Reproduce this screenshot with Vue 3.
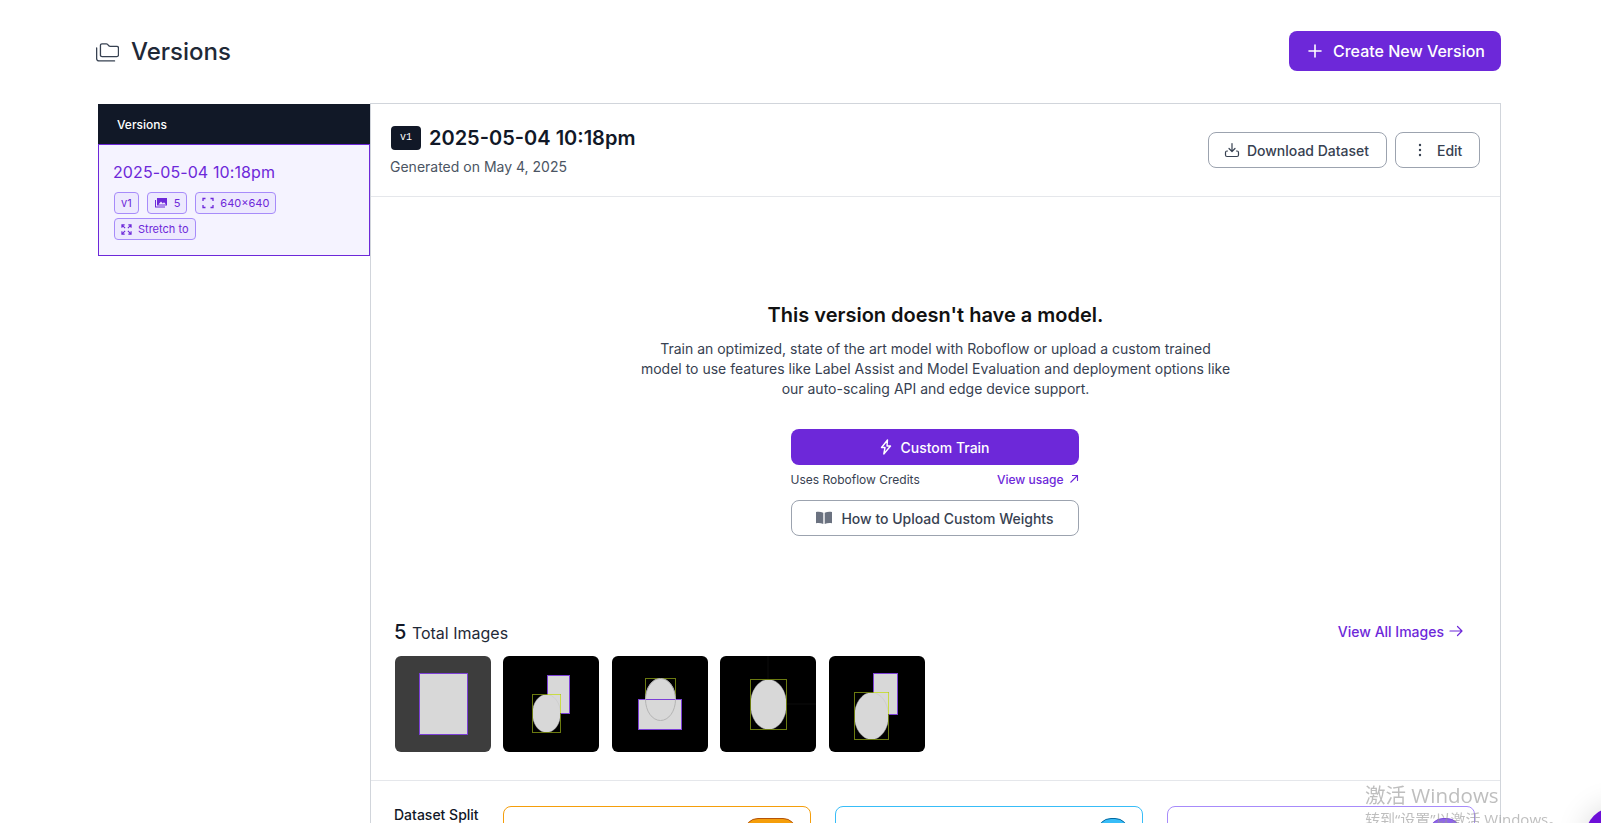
<script setup>
const thumbs = [
  { bg: '#3d3d3d', rects: [{ x: 24.5, y: 17.5, w: 48, h: 61 }], ovals: [] },
  { bg: '#000', rects: [{ x: 44.5, y: 19.5, w: 22, h: 38 }], ovals: [{ x: 29.5, y: 38.5, w: 28, h: 38 }], bright: 'M44.500 38.500h13v18.500' },
  { bg: '#000', rects: [], ovals: [{ x: 33.5, y: 22.5, w: 30, h: 42 }], top: { x: 26.5, y: 43.5, w: 43, h: 30 } },
  { bg: '#000', rects: [], ovals: [{ x: 30.5, y: 23.5, w: 36, h: 50 }], lines: true },
  { bg: '#000', rects: [{ x: 44.5, y: 17.5, w: 24, h: 41 }], ovals: [{ x: 25.5, y: 36.5, w: 34, h: 47 }], bright: 'M44.500 36.500h15v21.500' }
];

const splits = [
  { key: 'train', border: '#f59e0b', fill: '#f59e0b', edge: '#b45309' },
  { key: 'valid', border: '#38bdf8', fill: '#38bdf8', edge: '#0369a1' },
  { key: 'test', border: '#a78bfa', fill: '#8f67e8', edge: '#7c4fd8' }
];
</script>

<template>
  <div class="page">
    <header class="page-header">
      <h1 class="page-title">
        <svg class="folder-icon" width="23" height="19" viewBox="1.500 1 21 17.500" fill="none" stroke="#374151" stroke-width="1.200" stroke-linecap="round" stroke-linejoin="round">
          <path d="M5.500 12.500V3.200c0-.8.600-1.400 1.400-1.400h4c.5 0 .9.200 1.200.5l1.100 1.300c.3.300.7.500 1.200.5h6.200c.9 0 1.500.7 1.500 1.500v6.400c0 .9-.6 1.500-1.500 1.500H7c-.9 0-1.500-.6-1.500-1.500z" />
          <path d="M2 5.500v9.700c0 1.300 1 2.300 2.300 2.300h14.200" />
        </svg>
        Versions
      </h1>
      <button class="btn-create">
        <svg width="16" height="16" viewBox="0 0 16 16" fill="none" stroke="#fff" stroke-width="1.600" stroke-linecap="round"><path d="M8 2v12M2 8h12" /></svg>
        Create New Version
      </button>
    </header>

    <div class="layout">
      <aside class="sidebar">
        <div class="sidebar-head">Versions</div>
        <div class="version-card">
          <div class="version-name">2025-05-04 10:18pm</div>
          <div class="tags">
            <span class="tag">v1</span>
            <span class="tag">
              <svg width="14" height="12" viewBox="0 0 14 12" fill="#6d28d9"><path d="M3 1h10v7.500H3z" /><path d="M1 3h1v6.500h9v1H1z" /><path d="M4.500 7.500l2.500-3 1.800 2 1.200-1.200 2 2.200z" fill="#f0ecfd" /></svg>
              5
            </span>
            <span class="tag">
              <svg width="12" height="12" viewBox="0 0 12 12" fill="none" stroke="#6d28d9" stroke-width="1.300"><path d="M1 4V1.500h2.500M8.500 1.500H11V4M11 8v2.500H8.500M3.500 10.500H1V8" /></svg>
              640×640
            </span>
            <span class="tag">
              <svg width="11" height="11" viewBox="0 0 12 12" fill="none" stroke="#6d28d9" stroke-width="1.200"><path d="M1 4V1h3M8 1h3v3M11 8v3H8M4 11H1V8M1.500 1.500l3 3M10.500 1.500l-3 3M10.500 10.500l-3-3M1.500 10.500l3-3" /></svg>
              Stretch to
            </span>
          </div>
        </div>
      </aside>

      <main class="panel">
        <section class="panel-head">
          <div>
            <div class="head-title">
              <span class="v-badge">v1</span>
              <h2>2025-05-04 10:18pm</h2>
            </div>
            <p class="generated">Generated on May 4, 2025</p>
          </div>
          <div class="head-actions">
            <button class="btn-outline btn-download">
              <svg width="16" height="16" viewBox="0 0 16 16" fill="none" stroke="#374151" stroke-width="1.200" stroke-linecap="round" stroke-linejoin="round"><path d="M8 1.500v8M5 6.500l3 3 3-3" /><path d="M3.500 9H3c-.8 0-1.500.7-1.500 1.500V13c0 .8.700 1.500 1.500 1.500h10c.8 0 1.500-.7 1.500-1.500v-2.500c0-.8-.7-1.500-1.500-1.500h-.5" /></svg>
              Download Dataset
            </button>
            <button class="btn-outline btn-edit">
              <svg width="16" height="16" viewBox="0 0 16 16" fill="#374151"><circle cx="8" cy="3" r="1.200" /><circle cx="8" cy="8" r="1.200" /><circle cx="8" cy="13" r="1.200" /></svg>
              Edit
            </button>
          </div>
        </section>

        <section class="no-model">
          <h3>This version doesn't have a model.</h3>
          <p>Train an optimized, state of the art model with Roboflow or upload a custom trained model to use features like Label Assist and Model Evaluation and deployment options like our auto-scaling API and edge device support.</p>
          <div class="train-box">
            <button class="btn-train">
              <svg width="14" height="16" viewBox="0 0 14 16" fill="none" stroke="#fff" stroke-width="1.400" stroke-linejoin="round"><path d="M8.500 1L2.500 8.500h3.500L4.800 15l6.700-8H8z" /></svg>
              Custom Train
            </button>
            <div class="credits">
              <span>Uses Roboflow Credits</span>
              <a class="usage">View usage
                <svg width="10" height="10" viewBox="0 0 10 10" fill="none" stroke="#6d28d9" stroke-width="1.100"><path d="M1.500 8.500l7-7M3 1.500h5.500V7" /></svg>
              </a>
            </div>
            <button class="btn-outline btn-weights">
              <svg width="18" height="16" viewBox="0 0 18 16" fill="#6b7280"><path d="M1 2c2.500-.6 5-.3 7.300.8v11.200C6 13 3.500 12.700 1 13.300zM17 2c-2.500-.6-5-.3-7.300.8v11.200c2.300-1 4.800-1.300 7.300-.7z" /></svg>
              How to Upload Custom Weights
            </button>
          </div>
        </section>

        <section class="images">
          <div class="images-head">
            <div class="images-count"><b>5</b> Total Images</div>
            <a class="view-all">View All Images
              <svg width="14" height="14" viewBox="0 0 14 14" fill="none" stroke="#6d28d9" stroke-width="1.200" stroke-linecap="round" stroke-linejoin="round"><path d="M1 7h12M8.500 2.500L13 7l-4.500 4.500" /></svg>
            </a>
          </div>
          <div class="thumbs">
            <svg v-for="(t, i) in thumbs" :key="i" class="thumb" width="96" height="96" viewBox="0 0 96 96">
              <rect width="96" height="96" rx="6" :fill="t.bg" />
              <g v-if="t.lines" stroke="#0c0c0c" stroke-width="1">
                <path d="M48 0v23M66 48h30" />
              </g>
              <rect v-for="r in t.rects" :key="r.x" :x="r.x" :y="r.y" :width="r.w" :height="r.h" fill="#d8d8d8" stroke="#7c3fd6" stroke-width="1" />
              <g v-for="o in t.ovals" :key="o.x">
                <ellipse :cx="o.x + o.w / 2" :cy="o.y + o.h / 2" :rx="o.w / 2" :ry="o.h / 2" fill="#d8d8d8" stroke="#c4c4c4" stroke-width="0.500" />
                <rect :x="o.x" :y="o.y" :width="o.w" :height="o.h" fill="none" stroke="#6b7a10" stroke-width="1" />
              </g>
              <path v-if="t.bright" :d="t.bright" fill="none" stroke="#c9dc45" stroke-width="1" />
              <g v-if="t.top">
                <rect :x="t.top.x" :y="t.top.y" :width="t.top.w" :height="t.top.h" fill="#d8d8d8" stroke="#7c3fd6" stroke-width="1" />
                <ellipse cx="48.500" cy="43.500" rx="15" ry="21" fill="none" stroke="#b4b4b4" stroke-width="1" />
              </g>
            </svg>
          </div>
        </section>

        <section class="split">
          <div class="split-label">Dataset Split</div>
          <div class="split-cards">
            <div v-for="s in splits" :key="s.key" class="split-card" :style="{ borderColor: s.border }">
              <span class="split-badge" :style="{ background: s.fill, borderColor: s.edge }"></span>
            </div>
          </div>
        </section>
      </main>
    </div>

    <div class="watermark">
      <div class="wm-big">激活 Windows</div>
      <div class="wm-small">转到“设置”以激活 Windows。</div>
    </div>
    <div class="help-bubble"></div>
  </div>
</template>

<style>
html, body {
  margin: 0;
  background: #fff;
  overflow: hidden;
}
</style>

<style scoped>
.page {
  box-sizing: border-box;
  height: 100vh;
  overflow: hidden;
  padding: 31px 100px 0 98px;
  font-family: Inter, "Noto Sans CJK SC", sans-serif;
  color: #111827;
  background: #fff;
}

.page-header {
  display: flex;
  align-items: center;
  justify-content: space-between;
  height: 40px;
  margin-bottom: 32px;
}

.page-title {
  display: flex;
  align-items: center;
  gap: 12px;
  margin: 2px 0 0 -2px;
  font-size: 24px;
  line-height: 32px;
  font-weight: 500;
  color: #1f2937;
}

.btn-create {
  display: flex;
  align-items: center;
  gap: 10px;
  height: 40px;
  width: 212px;
  padding: 0 16px 0 18px;
  border: none;
  border-radius: 8px;
  background: #6d28d9;
  color: #fff;
  font: 500 16px Inter, sans-serif;
}

.layout {
  display: flex;
  align-items: flex-start;
}

.sidebar {
  width: 272px;
  flex: none;
  margin-top: 1px;
}

.sidebar-head {
  height: 40px;
  line-height: 42px;
  padding-left: 19px;
  background: #111827;
  color: #fff;
  font-size: 12px;
  font-weight: 500;
}

.version-card {
  box-sizing: border-box;
  height: 112px;
  padding: 15px 15px;
  background: #f5f3ff;
  border: 1px solid #6d28d9;
}

.version-name {
  font-size: 16px;
  line-height: 24px;
  letter-spacing: 0.1px;
  color: #6d28d9;
  margin: 0 0 8px -1px;
}

.tags {
  display: flex;
  flex-wrap: wrap;
  gap: 4px 8px;
}

.tag {
  display: inline-flex;
  align-items: center;
  gap: 6px;
  box-sizing: border-box;
  height: 22px;
  padding: 0 6px;
  border: 1px solid #a78bfa;
  border-radius: 4px;
  background: #ede9fe;
  color: #6d28d9;
  font-size: 11px;
}

.panel {
  flex: 1;
  min-width: 0;
  height: 760px;
  border: 1px solid #d1d5db;
  border-bottom: none;
  background: #fff;
}

.panel-head {
  box-sizing: border-box;
  display: flex;
  justify-content: space-between;
  height: 93px;
  padding: 22px 20px 0;
  border-bottom: 1px solid #e5e7eb;
}

.head-title {
  display: flex;
  align-items: center;
  gap: 8px;
}

.head-title h2 {
  margin: 0;
  font-size: 20px;
  line-height: 24px;
  font-weight: 600;
  color: #111827;
}

.v-badge {
  width: 30px;
  height: 24px;
  border-radius: 4px;
  background: #111827;
  color: #fff;
  font: 10px/24px "Liberation Mono", monospace;
  text-align: center;
}

.generated {
  margin: 7px 0 0 -1px;
  font-size: 14px;
  line-height: 20px;
  color: #4b5563;
}

.head-actions {
  display: flex;
  gap: 8px;
  padding-top: 6px;
}

.btn-outline {
  display: inline-flex;
  align-items: center;
  justify-content: center;
  box-sizing: border-box;
  height: 36px;
  border: 1px solid #9ca3af;
  border-radius: 8px;
  background: #fff;
  color: #374151;
  font: 500 14px Inter, sans-serif;
}

.btn-download {
  width: 179px;
  gap: 7px;
  padding: 0 2px 0 0;
}

.btn-edit {
  width: 85px;
  gap: 9px;
  justify-content: flex-start;
  padding: 0 0 0 16px;
}

.no-model {
  display: flex;
  flex-direction: column;
  align-items: center;
  height: 403px;
  box-sizing: border-box;
  padding-top: 104px;
}

.no-model h3 {
  margin: 0;
  font-size: 20px;
  line-height: 28px;
  font-weight: 600;
  color: #111;
}

.no-model p {
  width: 592px;
  margin: 10px 0 0;
  font-size: 14px;
  line-height: 20px;
  text-align: center;
  color: #374151;
}

.train-box {
  width: 288px;
  margin: 30px 2px 0 0;
}

.btn-train {
  display: flex;
  align-items: center;
  justify-content: center;
  gap: 7px;
  width: 100%;
  height: 36px;
  border: none;
  border-radius: 8px;
  background: #6d28d9;
  color: #fff;
  font: 500 14px Inter, sans-serif;
}

.credits {
  display: flex;
  justify-content: space-between;
  align-items: center;
  height: 16px;
  margin: 6px 0 13px;
  font-size: 12px;
  color: #374151;
}

.usage {
  display: flex;
  align-items: center;
  gap: 5px;
  color: #6d28d9;
  font-weight: 500;
}

.btn-weights {
  width: 100%;
  gap: 8px;
}

.images {
  box-sizing: border-box;
  height: 181px;
  padding: 20px 24px 0;
  border-bottom: 1px solid #e5e7eb;
}

.images-head {
  display: flex;
  justify-content: space-between;
  align-items: center;
  padding-right: 13px;
  height: 24px;
  margin-bottom: 12px;
}

.images-count {
  margin-left: -1px;
  font-size: 16px;
  color: #1f2937;
}

.images-count b {
  font-size: 20px;
  font-weight: 500;
  margin-right: 1px;
  color: #111827;
}

.view-all {
  display: flex;
  align-items: center;
  gap: 5px;
  margin-top: -2px;
  font-size: 14px;
  font-weight: 500;
  color: #6d28d9;
}

.thumbs {
  display: flex;
  gap: 12.400px;
}

.thumb {
  display: block;
  flex: none;
}

.split {
  display: flex;
  padding: 24px 24px 0;
}

.split-label {
  width: 108px;
  flex: none;
  margin-left: -1px;
  font-size: 14px;
  line-height: 20px;
  font-weight: 500;
  color: #111827;
}

.split-cards {
  display: flex;
  gap: 24px;
  margin: 1px 0 0 1px;
}

.split-card {
  box-sizing: border-box;
  width: 308px;
  height: 100px;
  padding: 11px 13px 0;
  display: flex;
  justify-content: flex-end;
  border: 1px solid;
  border-radius: 8px;
}

.split-badge {
  width: 53px;
  height: 28px;
  box-sizing: border-box;
  border: 1px solid;
  border-radius: 14px;
}

.split-card:nth-child(n + 2) .split-badge {
  width: 32px;
}

.watermark {
  position: fixed;
  left: 1365px;
  top: 781px;
  color: rgba(150, 150, 150, 0.62);
  pointer-events: none;
  white-space: nowrap;
  font-family: "Open Sans", "Noto Sans CJK SC", sans-serif;
}

.wm-big {
  font-size: 20.500px;
  line-height: 28px;
}

.wm-small {
  font-size: 15px;
  line-height: 20px;
}

.help-bubble {
  position: fixed;
  left: 1585px;
  top: 807px;
  width: 60px;
  height: 60px;
  border-radius: 50%;
  background: #6d0fd8;
  box-shadow: 0 0 30px rgba(0, 0, 0, 0.15);
}
</style>
